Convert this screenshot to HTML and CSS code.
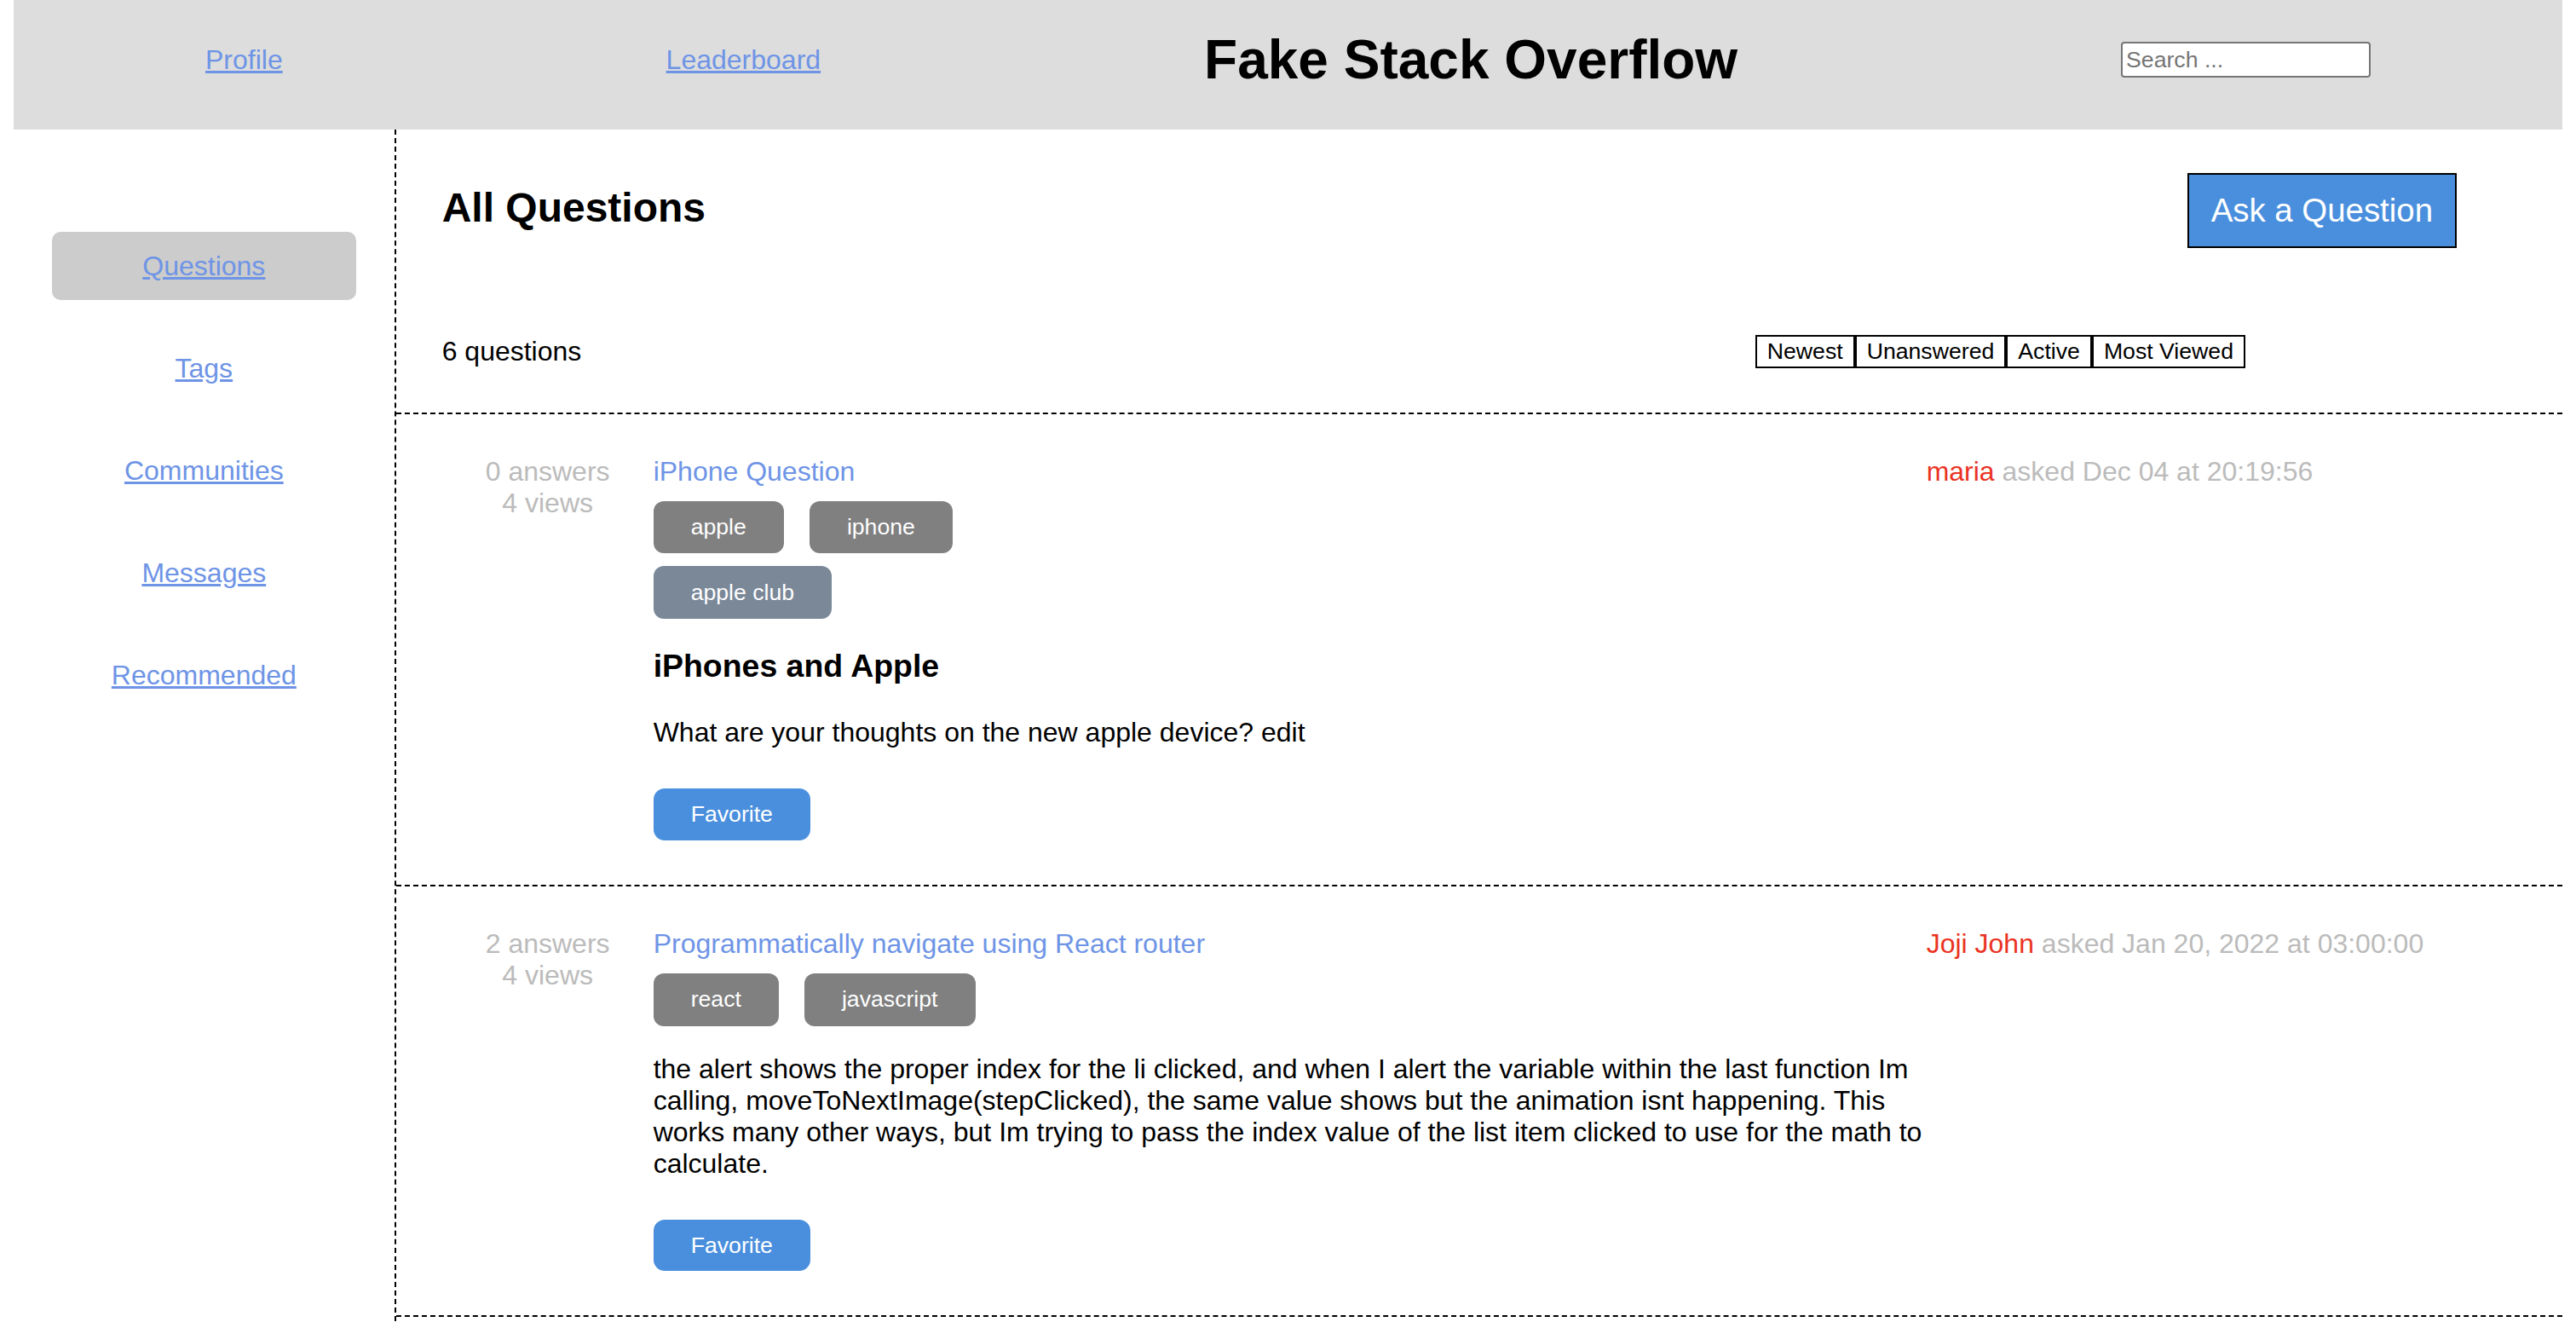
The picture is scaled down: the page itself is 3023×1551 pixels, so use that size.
FILE: index.html
```html
<!DOCTYPE html>
<html lang="en">
<head>
<meta charset="utf-8">
<title>Fake Stack Overflow</title>
<link rel="stylesheet" href="styles.css">
</head>
<body>
<header class="header">
  <a class="header-link" href="#">Profile</a>
  <a class="header-link" href="#">Leaderboard</a>
  <h1 class="site-title">Fake Stack Overflow</h1>
  <input class="search" type="text" placeholder="Search ...">
</header>
<div class="layout">
  <nav class="sidebar">
    <a class="side-item active" href="#">Questions</a>
    <a class="side-item" href="#">Tags</a>
    <a class="side-item" href="#">Communities</a>
    <a class="side-item" href="#">Messages</a>
    <a class="side-item" href="#">Recommended</a>
  </nav>
  <main class="main">
    <div class="main-top">
      <h2 class="page-title">All Questions</h2>
      <button class="ask-btn">Ask a Question</button>
    </div>
    <div class="main-sub">
      <div class="q-count">6 questions</div>
      <div class="sort-group">
        <button class="sort-btn">Newest</button>
        <button class="sort-btn">Unanswered</button>
        <button class="sort-btn">Active</button>
        <button class="sort-btn">Most Viewed</button>
      </div>
    </div>
    <div class="q-list">
      <div class="question">
        <div class="q-stats">
          <div>0 answers</div>
          <div>4 views</div>
        </div>
        <div class="q-body">
          <a class="q-title" href="#">iPhone Question</a>
          <div class="q-tags">
            <div class="tag-row">
              <span class="tag">apple</span>
              <span class="tag">iphone</span>
            </div>
            <div class="tag-row">
              <span class="tag community">apple club</span>
            </div>
          </div>
          <h3 class="q-summary">iPhones and Apple</h3>
          <p class="q-text">What are your thoughts on the new apple device? edit</p>
          <button class="fav-btn">Favorite</button>
        </div>
        <div class="q-meta"><span class="q-user">maria</span> asked Dec 04 at 20:19:56</div>
      </div>
      <div class="question">
        <div class="q-stats">
          <div>2 answers</div>
          <div>4 views</div>
        </div>
        <div class="q-body">
          <a class="q-title" href="#">Programmatically navigate using React router</a>
          <div class="q-tags">
            <div class="tag-row">
              <span class="tag">react</span>
              <span class="tag">javascript</span>
            </div>
          </div>
          <p class="q-text">the alert shows the proper index for the li clicked, and when I alert the variable within the last function Im calling, moveToNextImage(stepClicked), the same value shows but the animation isnt happening. This works many other ways, but Im trying to pass the index value of the list item clicked to use for the math to calculate.</p>
          <button class="fav-btn">Favorite</button>
        </div>
        <div class="q-meta"><span class="q-user">Joji John</span> asked Jan 20, 2022 at 03:00:00</div>
      </div>
    </div>
  </main>
</div>
</body>
</html>
```
FILE: styles.css
```css
html, body {
  background: #ffffff;
}

body {
  margin: 0 16px;
  font-family: "Liberation Sans", Arial, Helvetica, sans-serif;
  font-size: 32px;
  line-height: 37px;
  color: #000000;
}

/* ---------- header ---------- */
.header {
  height: 152px;
  box-sizing: border-box;
  padding-bottom: 12px;
  background: #dddddd;
  display: flex;
  justify-content: space-around;
  align-items: center;
}

.header-link {
  font-size: 32px;
  line-height: 37px;
  color: #6e94e6;
  text-decoration: underline;
}

.site-title {
  margin: 0;
  font-size: 64px;
  line-height: 74px;
  font-weight: bold;
}

.search {
  width: 293px;
  height: 42px;
  box-sizing: border-box;
  padding: 2px 4px;
  border: 2px solid #767676;
  border-radius: 4px;
  background: #ffffff;
  font-family: "Liberation Sans", Arial, sans-serif;
  font-size: 26.67px;
  color: #000000;
}

.search::placeholder {
  color: #757575;
}

/* ---------- layout ---------- */
.layout {
  display: flex;
  min-height: calc(100vh - 153px);
}

.sidebar {
  width: 15%;
  flex: none;
  box-sizing: border-box;
  border-right: 2px dashed #000000;
  padding-top: 120px;
  display: flex;
  flex-direction: column;
  align-items: center;
  gap: 40px;
}

.side-item {
  width: 80%;
  box-sizing: border-box;
  padding: 21.5px 0;
  border-radius: 10px;
  text-align: center;
  font-size: 32px;
  line-height: 37px;
  color: #6e94e6;
  text-decoration: underline;
}

.side-item.active {
  background: #cccccc;
}

.main {
  flex: 1;
  min-width: 0;
}

.main-top {
  display: flex;
  justify-content: space-between;
  align-items: flex-start;
  padding: 51px 124px 0 54px;
}

.page-title {
  margin: 12.5px 0 0;
  font-size: 48px;
  line-height: 55px;
  font-weight: bold;
}

.ask-btn {
  margin: 0;
  padding: 20px 26px;
  border: 2px solid #000000;
  border-radius: 0;
  background: #4a8fdd;
  color: #ffffff;
  font-family: "Liberation Sans", Arial, sans-serif;
  font-size: 38.4px;
  line-height: 44px;
}

.main-sub {
  margin-top: 102px;
  padding: 0 372px 0 54px;
  display: flex;
  justify-content: space-between;
  align-items: center;
}

.q-count {
  font-size: 32px;
  line-height: 37px;
}

.sort-group {
  display: flex;
}

.sort-btn {
  margin: 0;
  padding: 2px 12px;
  border: 2px solid #000000;
  border-radius: 0;
  background: #ffffff;
  color: #000000;
  font-family: "Liberation Sans", Arial, sans-serif;
  font-size: 26.67px;
  line-height: 30.7px;
}

/* ---------- questions ---------- */
.q-list {
  margin-top: 52px;
  border-top: 2px dashed #000000;
}

.question {
  display: grid;
  grid-template-columns: 248px 1494px 1fr;
  padding: 49px 0 52px 54px;
  border-bottom: 2px dashed #000000;
}

.q-stats {
  text-align: center;
  color: #bbbbbb;
}

.q-body {
  display: flex;
  flex-direction: column;
  align-items: flex-start;
}

.q-title {
  color: #6e94e6;
  text-decoration: none;
}

.q-tags {
  margin-top: 16px;
  display: flex;
  flex-direction: column;
  gap: 15px;
}

.tag-row {
  display: flex;
  gap: 30px;
}

.tag {
  display: block;
  padding: 15.5px 44px;
  border-radius: 12px;
  background: #808080;
  color: #ffffff;
  font-size: 26.67px;
  line-height: 30.7px;
}

.tag.community {
  background: #7a8898;
}

.q-summary {
  margin: 34px 0 0;
  font-size: 37.44px;
  line-height: 43px;
  font-weight: bold;
}

.q-text {
  margin: 32px 0 0;
}

.q-summary + .q-text {
  margin-top: 38px;
}

.fav-btn {
  margin: 47px 0 0;
  padding: 15px 44px;
  border: none;
  border-radius: 13px;
  background: #4a8fdd;
  color: #ffffff;
  font-family: "Liberation Sans", Arial, sans-serif;
  font-size: 26.67px;
  line-height: 30.7px;
}

.q-meta {
  color: #bbbbbb;
  white-space: nowrap;
}

.q-user {
  color: #ea3323;
}
```
